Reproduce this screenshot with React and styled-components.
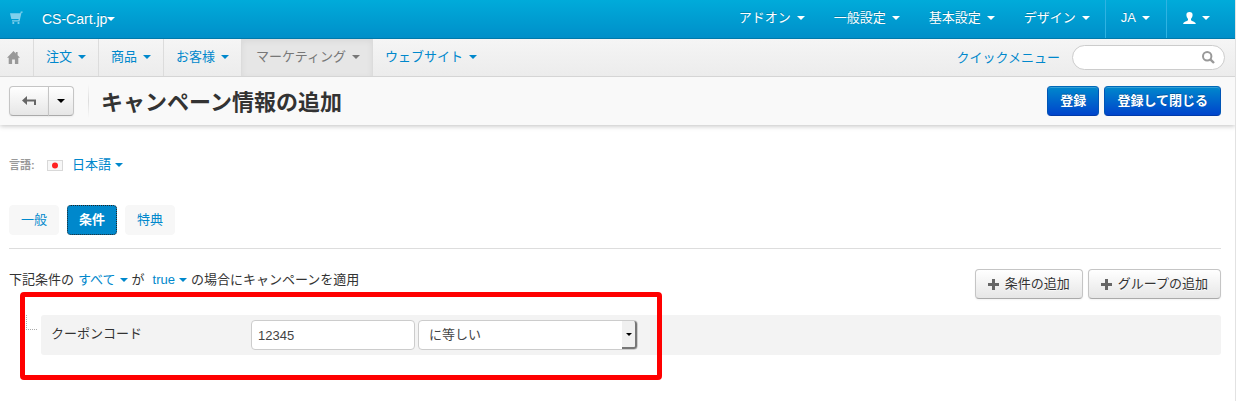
import React from 'react';
import styled, { createGlobalStyle, css } from 'styled-components';

const GlobalStyle = createGlobalStyle`
  * {
    box-sizing: border-box;
  }
  body {
    margin: 0;
    background: #fff;
    color: #333;
  }
  body, button, input, select {
    font-family: "Liberation Sans", "Noto Sans CJK JP", sans-serif;
    font-size: 13px;
    line-height: 20px;
  }
  a {
    color: #08c;
    text-decoration: none;
  }
`;

const Page = styled.div`
  min-height: 100vh;
  border-right: 1px solid #e2e2e2;
`;

const Caret = styled.span`
  flex: none;
  border: 4px solid transparent;
  border-top-color: currentColor;
  border-bottom: 0;
`;

const TopBar = styled.header`
  display: flex;
  justify-content: space-between;
  height: 39px;
  background: linear-gradient(#00abda, #008fc9);
  border-bottom: 1px solid #0079aa;
  text-shadow: 0 -1px 0 rgba(0, 0, 0, 0.2);
`;

const Brand = styled.div`
  display: flex;
  align-items: center;
  gap: 19px;
  padding-left: 9px;
`;

const BrandLink = styled.a`
  display: flex;
  align-items: center;
  font-size: 14px;
  color: #fff;
`;

const CartLink = styled.a`
  display: flex;
  padding-bottom: 2px;
`;

const TopMenu = styled.nav`
  display: flex;
`;

const TopLink = styled.a`
  display: flex;
  align-items: center;
  gap: 6px;
  padding: 0 15px 2px 14px;
  color: #fff;
  ${(props) =>
    props.$divided &&
    css`
      padding-right: 16px;
      padding-left: 15px;
      border-left: 1px solid #2fb3e2;
    `}
  ${(props) =>
    props.$last &&
    css`
      padding-right: 25px;
      padding-left: 16px;
    `}
`;

const NavBar = styled.div`
  display: flex;
  justify-content: space-between;
  height: 38px;
  background: linear-gradient(#f5f5f5, #ececec);
  border-bottom: 1px solid #d5d5d5;
`;

const NavMenu = styled.nav`
  display: flex;
`;

const NavLink = styled.a`
  display: flex;
  align-items: center;
  gap: 6px;
  padding: 0 12px 1px;
  border-left: 1px solid #dcdcdc;
  ${(props) =>
    props.$active &&
    css`
      padding-left: 14px;
      color: #777;
      background: #e6e6e6;
      box-shadow: inset 0 2px 6px rgba(0, 0, 0, 0.06);
    `}
`;

const HomeLink = styled.a`
  display: flex;
  align-items: center;
  padding: 0 13px 0 7px;
`;

const QuickArea = styled.div`
  display: flex;
  align-items: center;
  gap: 12px;
  padding-right: 10px;
`;

const SearchBox = styled.label`
  display: flex;
  align-items: center;
  width: 153px;
  height: 25px;
  padding-right: 9px;
  background: #fff;
  border: 1px solid #ccc;
  border-radius: 13px;
`;

const SearchInput = styled.input`
  flex: 1;
  min-width: 0;
  padding: 0 0 0 12px;
  border: 0;
  outline: 0;
  background: none;
`;

const ActionBar = styled.div`
  display: flex;
  align-items: center;
  height: 48px;
  padding: 0 14px 0 9px;
  background: #f9f9f9;
  box-shadow: 0 1px 5px rgba(0, 0, 0, 0.25);
  clip-path: inset(0 0 -10px 0);
`;

const Button = styled.button`
  display: flex;
  align-items: center;
  justify-content: center;
  gap: 5px;
  height: 30px;
  padding: 0 12px;
  color: #333;
  white-space: nowrap;
  background: linear-gradient(#fff, #e6e6e6);
  border: 1px solid #c5c5c5;
  border-bottom-color: #aaa;
  border-radius: 4px;
  text-shadow: 0 1px 1px rgba(255, 255, 255, 0.75);
  box-shadow: 0 1px 2px rgba(0, 0, 0, 0.05);
`;

const PrimaryButton = styled(Button)`
  color: #fff;
  font-weight: bold;
  background: linear-gradient(#0088cc, #0044cc);
  border-color: #0069b8 #0055b5 #003aa8;
  text-shadow: 0 -1px 0 rgba(0, 0, 0, 0.25);
  box-shadow: inset 0 1px 0 rgba(255, 255, 255, 0.2);
`;

const BackGroup = styled.div`
  display: flex;
`;

const BackButton = styled(Button)`
  width: 40px;
  padding: 0;
  border-radius: 4px 0 0 4px;
`;

const BackMenuButton = styled(Button)`
  width: 26px;
  margin-left: -1px;
  padding: 0;
  color: #000;
  border-radius: 0 4px 4px 0;
`;

const Separator = styled.div`
  width: 1px;
  height: 34px;
  margin: 0 12px 0 14px;
  background: linear-gradient(#f9f9f9, #ddd, #f9f9f9);
`;

const Title = styled.h1`
  flex: 1;
  margin: 0;
  padding-top: 4px;
  font-size: 22px;
  line-height: 30px;
`;

const Actions = styled.div`
  display: flex;
  gap: 5px;
`;

const Content = styled.main`
  padding: 30px 14px 0 9px;
`;

const Language = styled.div`
  display: flex;
  align-items: center;
`;

const LanguageLabel = styled.span`
  width: 38px;
  font-size: 11px;
  font-weight: bold;
  color: #999;
`;

const LanguageLink = styled.a`
  display: flex;
  align-items: center;
  gap: 4px;
  margin-left: 9px;
`;

const Tabs = styled.div`
  display: flex;
  gap: 8px;
  padding: 30px 0 13px;
  border-bottom: 1px solid #ddd;
`;

const Tab = styled.button`
  height: 30px;
  padding: 0 11px;
  border: 1px solid #f7f7f7;
  border-radius: 4px;
  color: #08c;
  background: #f7f7f7;
  ${(props) =>
    props.$active &&
    css`
      color: #fff;
      font-weight: bold;
      background: #08c;
      border: 1px dotted #222;
    `}
`;

const ConditionHead = styled.div`
  display: flex;
  justify-content: space-between;
  padding: 20px 0 16px;
`;

const Sentence = styled.div`
  display: flex;
  align-items: center;
  height: 22px;
  white-space: nowrap;
`;

const InlineLink = styled.a`
  display: flex;
  align-items: center;
  gap: 4px;
  margin: 0 4px 0 ${(props) => props.$before};
`;

const ConditionList = styled.div`
  position: relative;
  display: flex;
  padding-left: 17px;
`;

const Branch = styled.div`
  flex: none;
  width: 11px;
  height: 15px;
  margin-right: 4px;
  border: 1px dotted #aaa;
  border-width: 0 0 1px 1px;
`;

const ConditionRow = styled.div`
  flex: 1;
  display: flex;
  align-items: center;
  gap: 3px;
  height: 40px;
  padding-left: 10px;
  background: #f3f3f3;
  border-radius: 3px;
`;

const FieldLabel = styled.label`
  width: 197px;
  padding-bottom: 2px;
`;

const TextInput = styled.input`
  width: 164px;
  height: 30px;
  padding: 0 6px;
  color: #444;
  background: #fff;
  border: 1px solid #ccc;
  border-radius: 4px;
`;

const SelectBox = styled.div`
  position: relative;
  width: 220px;
  height: 30px;
`;

const Select = styled.select`
  appearance: none;
  width: 100%;
  height: 100%;
  padding: 0 20px 0 10px;
  color: #444;
  background: #fff;
  border: 1px solid #ccc;
  border-radius: 4px;
`;

const SelectArrow = styled.span`
  position: absolute;
  top: 1px;
  right: 1px;
  bottom: 1px;
  display: flex;
  align-items: center;
  justify-content: center;
  width: 15px;
  color: #000;
  background: #f0f0f0;
  border: solid #777;
  border-width: 0 2px 2px 0;
  border-radius: 0 3px 3px 0;
  pointer-events: none;
`;

const SmallCaret = styled(Caret)`
  border-width: 3px 3px 0;
`;

const Highlight = styled.div`
  position: absolute;
  top: -23px;
  left: 11px;
  width: 642px;
  height: 88px;
  border: 5px solid #f00;
  border-radius: 4px;
  pointer-events: none;
`;

const CartIcon = () => (
  <svg width="14" height="14" viewBox="0 0 14 14" fill="#80d0ec">
    <path d="M13.6 0.6h-1.8l-0.5 1.7H1l1.3 5.6h7.4l-0.3 1.3H3v1.2h7.5l2-8.6h1.1z" />
    <circle cx="4.3" cy="12" r="1.1" />
    <circle cx="9.5" cy="12" r="1.1" />
  </svg>
);

const HomeIcon = () => (
  <svg width="13" height="13" viewBox="0 0 13 13" fill="#999">
    <path d="M6.5 0L0 6.7h1.7V13h3.4V8.6h2.8V13h3.4V6.7H13L10.6 4.2V0.9H8.8v1.5z" />
  </svg>
);

const UserIcon = () => (
  <svg width="13" height="12" viewBox="0 0 13 12" fill="#fff">
    <path d="M6.5 0C4.4 0 3.3 1.3 3.4 3.1c0.1 1.8 0.8 3 1.6 3.8v1.3C4.6 9.2 0.4 9.2 0.2 12h12.6c-0.2-2.8-4.4-2.8-4.8-3.8V6.9c0.8-0.8 1.500-2 1.600-3.800C9.700 1.300 8.600 0 6.500 0z" />
  </svg>
);

const SearchIcon = () => (
  <svg width="13" height="13" viewBox="0 0 13 13" fill="none" stroke="#999">
    <circle cx="5.2" cy="5.2" r="4.2" strokeWidth="2" />
    <path d="M8.3 8.3L12 12" strokeWidth="2.4" />
  </svg>
);

const BackIcon = () => (
  <svg width="14" height="10" viewBox="0 0 14 10" fill="#666">
    <path d="M5 0v3.5h9V9h-2V5.500H5V9L0 4.500z" />
  </svg>
);

const PlusIcon = () => (
  <svg width="12" height="11" viewBox="0 0 12 11" fill="#666">
    <path d="M4 0h3v4h4v3H7v4H4V7H0V4h4z" />
  </svg>
);

const FlagIcon = () => (
  <svg width="16" height="11" viewBox="0 0 16 11">
    <rect x="0.5" y="0.5" width="15" height="10" fill="#f7f7f7" stroke="#d8d8d8" />
    <circle cx="8" cy="5.5" r="3" fill="#f22" />
  </svg>
);

const navItems = ['注文', '商品', 'お客様', 'マーケティング', 'ウェブサイト'];
const topItems = ['アドオン', '一般設定', '基本設定', 'デザイン'];
const tabs = ['一般', '条件', '特典'];

const Header = () => (
  <TopBar>
    <Brand>
      <CartLink href="#" aria-label="CS-Cart">
        <CartIcon />
      </CartLink>
      <BrandLink href="#">
        CS-Cart.jp
        <Caret />
      </BrandLink>
    </Brand>
    <TopMenu>
      {topItems.map((name) => (
        <TopLink href="#" key={name}>
          {name}
          <Caret />
        </TopLink>
      ))}
      <TopLink href="#" $divided>
        JA
        <Caret />
      </TopLink>
      <TopLink href="#" $divided $last aria-label="User">
        <UserIcon />
        <Caret />
      </TopLink>
    </TopMenu>
  </TopBar>
);

const Navigation = () => (
  <NavBar>
    <NavMenu>
      <HomeLink href="#" aria-label="Home">
        <HomeIcon />
      </HomeLink>
      {navItems.map((name) => (
        <NavLink href="#" key={name} $active={name === 'マーケティング'}>
          {name}
          <Caret />
        </NavLink>
      ))}
    </NavMenu>
    <QuickArea>
      <a href="#">クイックメニュー</a>
      <SearchBox>
        <SearchInput type="text" aria-label="Search" />
        <SearchIcon />
      </SearchBox>
    </QuickArea>
  </NavBar>
);

const Conditions = () => (
  <section>
    <ConditionHead>
      <Sentence>
        下記条件の
        <InlineLink href="#" $before="4px">
          すべて
          <Caret />
        </InlineLink>
        が
        <InlineLink href="#" $before="8px">
          true
          <Caret />
        </InlineLink>
        の場合にキャンペーンを適用
      </Sentence>
      <Actions>
        <Button type="button">
          <PlusIcon />
          条件の追加
        </Button>
        <Button type="button">
          <PlusIcon />
          グループの追加
        </Button>
      </Actions>
    </ConditionHead>
    <ConditionList>
      <Branch />
      <ConditionRow>
        <FieldLabel htmlFor="coupon">クーポンコード</FieldLabel>
        <TextInput id="coupon" type="text" defaultValue="12345" />
        <SelectBox>
          <Select aria-label="Operator">
            <option>に等しい</option>
          </Select>
          <SelectArrow>
            <SmallCaret />
          </SelectArrow>
        </SelectBox>
      </ConditionRow>
      <Highlight />
    </ConditionList>
  </section>
);

export default function App() {
  return (
    <Page>
      <GlobalStyle />
      <Header />
      <Navigation />
      <ActionBar>
        <BackGroup>
          <BackButton type="button" aria-label="Back">
            <BackIcon />
          </BackButton>
          <BackMenuButton type="button" aria-label="More">
            <Caret />
          </BackMenuButton>
        </BackGroup>
        <Separator />
        <Title>キャンペーン情報の追加</Title>
        <Actions>
          <PrimaryButton type="button">登録</PrimaryButton>
          <PrimaryButton type="button">登録して閉じる</PrimaryButton>
        </Actions>
      </ActionBar>
      <Content>
        <Language>
          <LanguageLabel>言語:</LanguageLabel>
          <FlagIcon />
          <LanguageLink href="#">
            日本語
            <Caret />
          </LanguageLink>
        </Language>
        <Tabs>
          {tabs.map((name) => (
            <Tab type="button" key={name} $active={name === '条件'}>
              {name}
            </Tab>
          ))}
        </Tabs>
        <Conditions />
      </Content>
    </Page>
  );
}
